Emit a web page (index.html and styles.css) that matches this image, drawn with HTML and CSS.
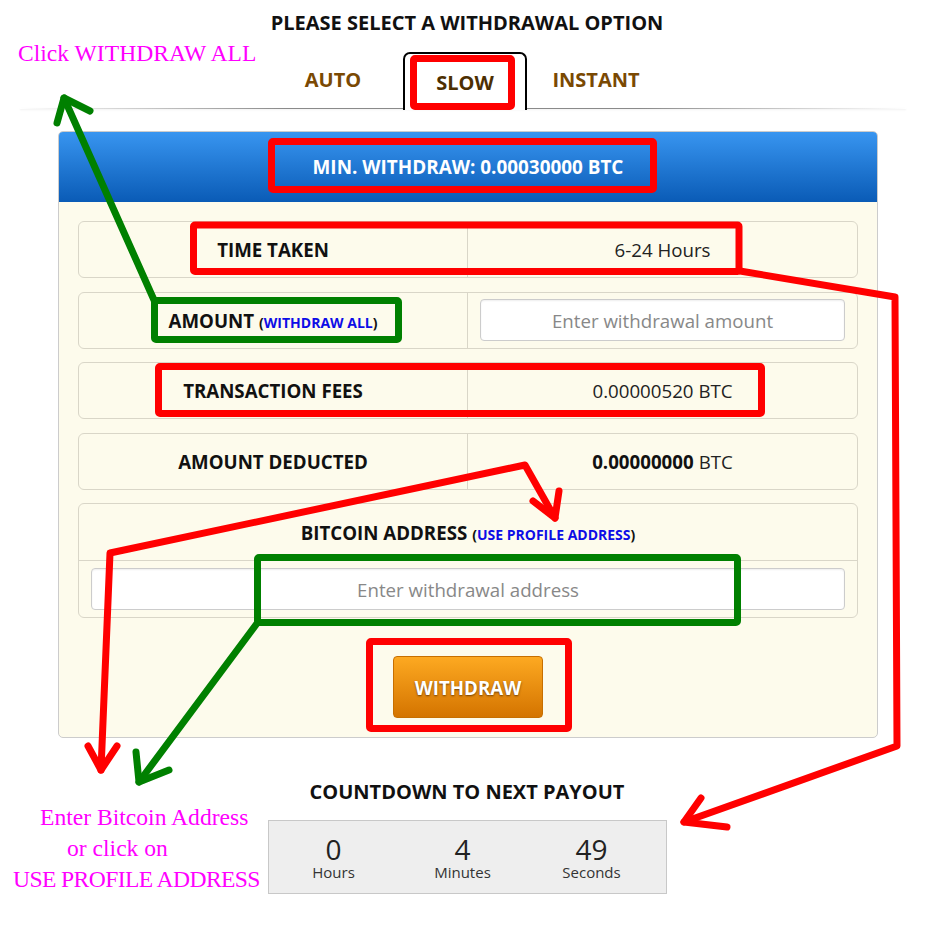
FILE: index.html
```html
<!DOCTYPE html>
<html>
<head>
<meta charset="utf-8">
<link rel="stylesheet" href="styles.css">
</head>
<body>
<div class="page">
  <h1 class="title">PLEASE SELECT A WITHDRAWAL OPTION</h1>
  <div class="tabs">
    <div class="tab">AUTO</div>
    <div class="tab active">SLOW</div>
    <div class="tab wide">INSTANT</div>
  </div>

  <div class="panel">
    <div class="panel-head">MIN. WITHDRAW: 0.00030000 BTC</div>
    <div class="panel-body">
      <div class="row">
        <div class="cell label">TIME TAKEN</div>
        <div class="cell value">6-24 Hours</div>
      </div>
      <div class="row">
        <div class="cell label">AMOUNT <span class="paren">(<span class="link">WITHDRAW ALL</span>)</span></div>
        <div class="cell value"><input class="field" type="text" placeholder="Enter withdrawal amount"></div>
      </div>
      <div class="row">
        <div class="cell label">TRANSACTION FEES</div>
        <div class="cell value">0.00000520 BTC</div>
      </div>
      <div class="row">
        <div class="cell label">AMOUNT DEDUCTED</div>
        <div class="cell value"><b>0.00000000</b> BTC</div>
      </div>
      <div class="addr">
        <div class="addr-head">BITCOIN ADDRESS <span class="paren">(<span class="link">USE PROFILE ADDRESS</span>)</span></div>
        <div class="addr-body"><input class="field" type="text" placeholder="Enter withdrawal address"></div>
      </div>
      <button class="btn">WITHDRAW</button>
    </div>
  </div>

  <h2 class="cd-title">COUNTDOWN TO NEXT PAYOUT</h2>
  <div class="cd-box">
    <div class="cd-col"><div class="cd-num">0</div><div class="cd-lbl">Hours</div></div>
    <div class="cd-col"><div class="cd-num">4</div><div class="cd-lbl">Minutes</div></div>
    <div class="cd-col"><div class="cd-num">49</div><div class="cd-lbl">Seconds</div></div>
  </div>

  <svg class="annot" width="934" height="939" viewBox="0 0 934 939">
    <g fill="none" stroke="#ff0000" stroke-width="7" stroke-linejoin="round" stroke-linecap="round">
      <rect x="413.5" y="58.5" width="98" height="48" rx="1.5"/>
      <rect x="271.5" y="141.5" width="382" height="48" rx="1.5"/>
      <rect x="193.5" y="225" width="545.5" height="46.5" rx="1.5"/>
      <rect x="158.5" y="366.5" width="603" height="47" rx="1.5"/>
      <rect x="369.5" y="641.5" width="199" height="87" rx="1.5"/>
      <polyline points="740,271 895,297 897,746 684,822"/>
      <polyline points="701,798 684,822 727,827"/>
      <polyline points="101,770 110,553 525,465 555,518"/>
      <polyline points="88,746 101,770 117,746"/>
      <polyline points="533,501 555,518 559,491"/>
    </g>
    <g fill="none" stroke="#008000" stroke-width="7" stroke-linejoin="round" stroke-linecap="round">
      <rect x="154.5" y="300.5" width="244" height="39" rx="1.5"/>
      <rect x="257.5" y="557.5" width="480" height="65" rx="1.5"/>
      <polyline points="154,300 64,98"/>
      <polyline points="57,123 64,98 90,111"/>
      <polyline points="258,622 139,782"/>
      <polyline points="136,752 139,782 169,770"/>
    </g>
  </svg>

  <div class="note note-top">Click WITHDRAW ALL</div>
  <div class="note note-bottom">
    <div class="nl n1">Enter Bitcoin Address</div>
    <div class="nl n2">or click on</div>
    <div class="nl n3">USE PROFILE ADDRESS</div>
  </div>
</div>
</body>
</html>
```

FILE: styles.css
```css
* { box-sizing: border-box; }
body {
  margin: 0;
  background: #ffffff;
  font-family: "Open Sans", "Liberation Sans", sans-serif;
  color: #111111;
}
.page {
  position: relative;
  width: 934px;
  height: 939px;
  overflow: hidden;
}
.title {
  margin: 0;
  padding-top: 10px;
  height: 34px;
  line-height: 26px;
  font-size: 20px;
  font-weight: 700;
  text-align: center;
  color: #111;
}
.tabs {
  position: relative;
  display: flex;
  justify-content: center;
  margin-top: 18px;
  height: 57px;
  padding-right: 6px;
}
.tabs::before {
  content: "";
  position: absolute;
  left: 20px;
  right: 28px;
  bottom: 0;
  height: 1px;
  background: linear-gradient(to right, rgba(120,120,120,0), #8a8a8a 30%, #8a8a8a 70%, rgba(120,120,120,0));
  box-shadow: 0 1px 2px rgba(0,0,0,0.08);
}
.tab {
  position: relative;
  width: 140px;
  height: 57px;
  line-height: 56px;
  text-align: center;
  font-size: 20px;
  font-weight: 700;
  color: #7a4903;
}
.tab.wide { width: 138px; }
.tab.active {
  width: 124px;
  height: 58px;
  padding-top: 3px;
  border: 2px solid #000;
  border-bottom: none;
  border-radius: 7px 7px 0 0;
  background: #fff;
  color: #4d2f02;
  line-height: 52px;
  z-index: 1;
}
.panel {
  margin: 22px 0 0 58px;
  width: 820px;
  border: 1px solid #cccccc;
  border-radius: 5px;
  overflow: hidden;
  background: #fdfbec;
}
.panel-head {
  height: 70px;
  line-height: 70px;
  text-align: center;
  font-size: 18.9px;
  font-weight: 700;
  color: #ffffff;
  background: linear-gradient(#3895f0, #0a5bb6);
}
.panel-body {
  padding: 19px 19px 19px;
  display: flex;
  flex-direction: column;
  gap: 13.5px;
}
.row {
  display: grid;
  grid-template-columns: 1fr 1fr;
  height: 57px;
  border: 1px solid #d9d6c8;
  border-radius: 6px;
}
.cell {
  display: flex;
  align-items: center;
  justify-content: center;
  font-size: 18.7px;
}
.cell.label {
  font-weight: 700;
  border-right: 1px solid #d9d6c8;
  color: #111;
}
.cell.value {
  color: #222;
  padding: 0 12px;
}
.cell.value b { font-weight: 700; color: #111; margin-right: 5px; }
.paren {
  font-size: 14px;
  font-weight: 700;
  margin-left: 5px;
  position: relative;
  top: 2px;
}
.link { color: #0d0de6; }
.field {
  display: block;
  width: 100%;
  height: 42px;
  border: 1px solid #cccccc;
  border-radius: 4px;
  background: #ffffff;
  box-shadow: inset 0 1px 2px rgba(0,0,0,0.07);
  font-family: "Open Sans", "Liberation Sans", sans-serif;
  font-size: 18.7px;
  text-align: center;
  color: #333;
  outline: none;
  padding: 0 10px;
}
.field::placeholder { color: #888888; }
.addr {
  border: 1px solid #d9d6c8;
  border-radius: 6px;
}
.addr-head {
  height: 57px;
  border-bottom: 1px solid #d9d6c8;
  display: flex;
  align-items: center;
  justify-content: center;
  font-size: 18.7px;
  font-weight: 700;
  padding-top: 1px;
}
.addr-body {
  padding: 7px 12px 7px;
}
.btn {
  display: block;
  margin: 24.5px auto 0;
  width: 150px;
  height: 62px;
  border: 1px solid #c76f00;
  border-radius: 4px;
  background: linear-gradient(#fda921, #d47400);
  color: #ffffff;
  font-family: "Open Sans", "Liberation Sans", sans-serif;
  font-size: 18.7px;
  font-weight: 700;
  text-shadow: 0 1px 2px rgba(60,30,0,0.7);
  padding: 0;
}
.cd-title {
  margin: 41px 0 0;
  height: 26px;
  line-height: 26px;
  font-size: 20px;
  font-weight: 700;
  text-align: center;
  color: #111;
}
.cd-box {
  margin: 15px 0 0 268px;
  width: 399px;
  height: 74px;
  border: 1px solid #c8c8c8;
  background: #eeeeee;
  display: grid;
  grid-template-columns: 129px 129px 129px;
  padding-top: 13px;
}
.cd-col { text-align: center; }
.cd-num {
  font-size: 28px;
  line-height: 30px;
  color: #222;
}
.cd-lbl {
  font-size: 15px;
  line-height: 16px;
  color: #333;
}
.annot {
  position: absolute;
  left: 0;
  top: 0;
  z-index: 5;
  pointer-events: none;
}
.note {
  position: absolute;
  font-family: "Liberation Serif", "Times New Roman", serif;
  font-size: 23.6px;
  color: #ff00ff;
  white-space: nowrap;
  z-index: 6;
}
.note-top {
  left: 18px;
  top: 39px;
  line-height: 28px;
}
.note-bottom {
  left: 0;
  top: 802px;
}
.nl { line-height: 31px; }
.n1 { padding-left: 40px; }
.n2 { padding-left: 67px; }
.n3 { padding-left: 13px; letter-spacing: -0.6px; }
```
